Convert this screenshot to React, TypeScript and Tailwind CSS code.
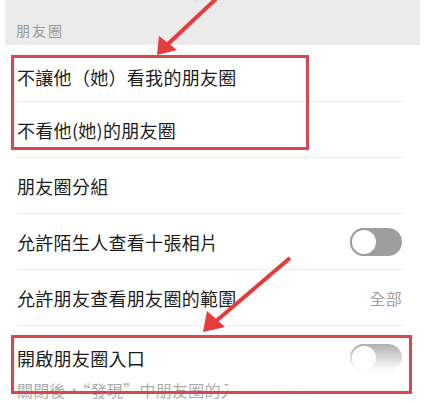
import React from "react";

type Row = { label: string; right?: "toggle" | string };

const rows: Row[] = [
  { label: "朋友圈分組" },
  { label: "允許陌生人查看十張相片", right: "toggle" },
  { label: "允許朋友查看朋友圈的範圍", right: "全部" },
];

function Toggle() {
  return (
    <div className="relative h-[28px] w-[52px] rounded-full bg-[#9e9e9e]">
      <div className="absolute left-0 top-0 h-[28px] w-[28px] rounded-full border-[2px] border-[#9e9e9e] bg-white" />
    </div>
  );
}

export default function App() {
  return (
    <div className="relative h-[402px] w-[425px] overflow-hidden bg-white font-['Noto_Sans_CJK_TC','Noto_Sans',sans-serif] text-[#1c1c1c]">
      <div className="mx-[5px] flex h-[45px] items-center bg-[#ebebeb] pl-[11px] pt-[15px] text-[14px] leading-none tracking-[2px] text-[#9a9a9a]">
        朋友圈
      </div>

      <div className="pl-[17px] pr-[23px] text-[18px] leading-[24px] tracking-[0.3px]">
        <div className="flex h-[57px] items-center border-b border-[#ececec] pt-[7px]">
          不讓他（她）看我的朋友圈
        </div>
        <div className="flex h-[56px] items-center border-b border-[#ececec]">
          不看他(她)的朋友圈
        </div>
        {rows.map((row) => (
          <div
            key={row.label}
            className="flex h-[56px] items-center justify-between border-b border-[#ececec]"
          >
            <span>{row.label}</span>
            {row.right === "toggle" ? (
              <Toggle />
            ) : row.right ? (
              <span className="text-[16px] text-[#a0a0a0]">{row.right}</span>
            ) : null}
          </div>
        ))}
        <div className="flex items-center justify-between pt-[18px]">
          <span>開啟朋友圈入口</span>
          <Toggle />
        </div>
        <div className="mt-[6px] whitespace-nowrap text-[16px] text-[#ababab]">
          關閉後，“發現”中朋友圈的入口將被隱藏
        </div>
      </div>

      {/* watermark blur over the last toggle */}
      <div className="absolute left-[228px] top-[341px] h-[61px] w-[182px] bg-linear-to-b from-white/10 via-white/95 via-45% to-white" />

      {/* red highlight boxes */}
      <div className="absolute left-[11px] top-[55px] h-[95px] w-[298px] border-[3px] border-[#d7474b]" />
      <div className="absolute left-[11px] top-[335px] h-[59px] w-[401px] border-[3px] border-[#d7474b]" />

      {/* arrows */}
      <svg className="pointer-events-none absolute inset-0" width="425" height="402">
        <line x1="217" y1="-2" x2="168" y2="44" stroke="#e63c3c" strokeWidth="4" />
        <polygon points="157,55 159,36 177,50" fill="#e63c3c" />
        <line x1="290" y1="258" x2="215" y2="322" stroke="#e63c3c" strokeWidth="4" />
        <polygon points="203,332 207,311 225,327" fill="#e63c3c" />
      </svg>
    </div>
  );
}
